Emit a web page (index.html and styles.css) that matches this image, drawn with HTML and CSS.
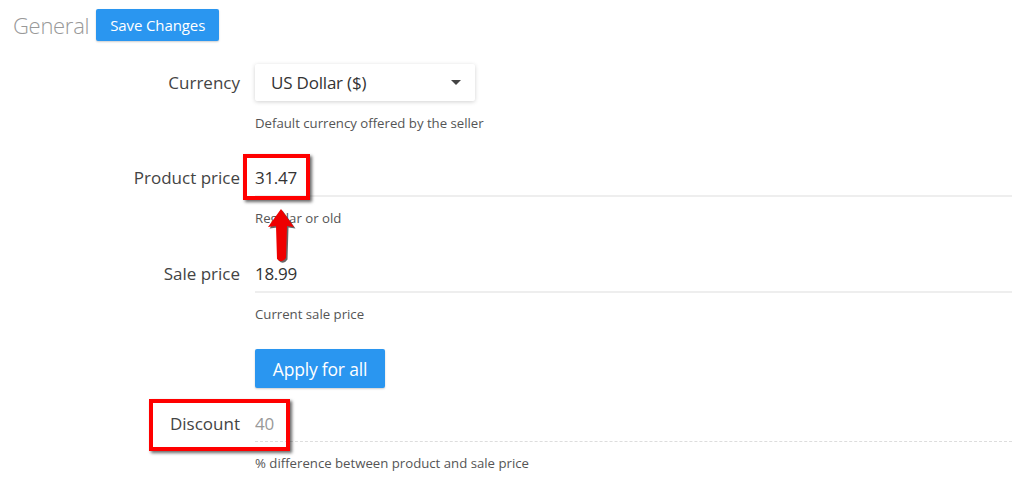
FILE: index.html
```html
<!DOCTYPE html>
<html lang="en">
  <head>
    <meta charset="UTF-8" />
    <meta name="viewport" content="width=device-width, initial-scale=1.0" />
    <title>General</title>
    <link rel="stylesheet" href="styles.css">
  </head>
  <body>
    <div class="page">
      <div class="header">
        <h2 class="title">General</h2>
        <button type="button" class="btn btn-save">Save Changes</button>
      </div>

      <form class="form" action="">
        <div class="field field-currency">
          <label class="field-label">Currency</label>
          <div class="field-body">
            <div class="select">
              <span>US Dollar ($)</span>
              <span class="caret"></span>
            </div>
            <p class="hint">Default currency offered by the seller</p>
          </div>
        </div>

        <div class="field field-product">
          <label class="field-label">Product price</label>
          <div class="field-body">
            <input class="text-input" type="text" value="31.47" />
            <p class="hint">Regular or old</p>
          </div>
        </div>

        <div class="field field-sale">
          <label class="field-label">Sale price</label>
          <div class="field-body">
            <input class="text-input" type="text" value="18.99" />
            <p class="hint">Current sale price</p>
          </div>
        </div>

        <div class="field field-apply">
          <span></span>
          <div class="field-body">
            <button type="button" class="btn btn-apply">Apply for all</button>
          </div>
        </div>

        <div class="field field-discount">
          <label class="field-label">Discount</label>
          <div class="field-body">
            <input class="text-input text-input-disabled" type="text" value="40" disabled />
            <p class="hint">% difference between product and sale price</p>
          </div>
        </div>
      </form>

      <!-- marcações -->
      <div class="mark mark-price"></div>
      <div class="mark mark-discount"></div>
      <svg class="arrow" width="34" height="60" viewBox="0 0 34 60">
        <path d="M16 2 L29 20 L22 19 L21 51 Q17 57 12 52 L11 19 L3 20 Z" fill="#333" opacity="0.75" transform="translate(1.5 1.5)" />
        <path d="M16 2 L29 20 L22 19 L21 51 Q17 57 12 52 L11 19 L3 20 Z" fill="#ee0000" />
      </svg>
    </div>
  </body>
</html>
```

FILE: styles.css
```css
body {
  margin: 0;
  background: #fff;
  font-family: "Open Sans", "Liberation Sans", sans-serif;
  color: #444;
}
.page {
  position: relative;
  width: 1018px;
  height: 490px;
  overflow: hidden;
}
.header {
  display: flex;
  align-items: center;
  gap: 7px;
  padding: 9px 0 0 13px;
}
.title {
  margin: 0;
  font-weight: 300;
  font-size: 22px;
  color: #999;
  letter-spacing: -0.3px;
}
.btn {
  background-color: #2a96f0;
  color: white;
  border: none;
  border-radius: 2px;
  cursor: pointer;
  font-family: "Open Sans", sans-serif;
  box-shadow: 0 1px 2px rgba(0, 0, 0, 0.2);
}
.btn-save {
  height: 32px;
  width: 123px;
  padding: 0;
  font-size: 15px;
  letter-spacing: -0.1px;
}
.btn-apply {
  height: 39px;
  width: 130px;
  font-size: 17.5px;
  letter-spacing: -0.2px;
}
.form {
  display: flex;
  flex-direction: column;
}
.field {
  display: grid;
  grid-template-columns: 240px 766px;
  column-gap: 15px;
}
.field-label {
  text-align: right;
  font-size: 17px;
  color: #444;
  line-height: 38px;
}
.field-body {
  display: flex;
  flex-direction: column;
  align-items: flex-start;
}
.field-currency {
  margin-top: 23px;
}
.select {
  box-sizing: border-box;
  width: 220px;
  height: 37px;
  padding: 0 14px 0 16px;
  display: flex;
  align-items: center;
  justify-content: space-between;
  font-size: 17px;
  color: #333;
  background: #fff;
  box-shadow: 0 1px 4px rgba(0, 0, 0, 0.18);
  border-radius: 2px;
  letter-spacing: -0.2px;
}
.caret {
  width: 0;
  height: 0;
  border-left: 5px solid transparent;
  border-right: 5px solid transparent;
  border-top: 5px solid #444;
}
.hint {
  margin: 14px 0 0;
  font-size: 13.2px;
  line-height: 16px;
  color: #555;
}
.text-input {
  box-sizing: border-box;
  width: 757px;
  height: 38px;
  padding: 0;
  border: none;
  border-bottom: 2px solid #eee;
  outline: none;
  background: transparent;
  font-family: "Open Sans", sans-serif;
  font-size: 17px;
  color: #333;
  letter-spacing: -0.3px;
}
.field-product {
  margin-top: 28px;
}
.field-product .hint,
.field-sale .hint,
.field-discount .hint {
  margin-top: 13px;
}
.field-sale {
  margin-top: 29px;
}
.field-apply {
  margin-top: 27px;
}
.field-discount {
  margin-top: 17px;
}
.text-input-disabled {
  color: #999;
  border-bottom: 1px dashed #ddd;
  height: 37px;
}
.mark {
  position: absolute;
  box-sizing: border-box;
  border: 4px solid #f00;
  box-shadow: 2px 2px 3px rgba(0, 0, 0, 0.6);
}
.mark-price {
  left: 243px;
  top: 154px;
  width: 67px;
  height: 46px;
}
.mark-discount {
  left: 149px;
  top: 399px;
  width: 141px;
  height: 52px;
}
.arrow {
  position: absolute;
  left: 265px;
  top: 207px;
}
```
